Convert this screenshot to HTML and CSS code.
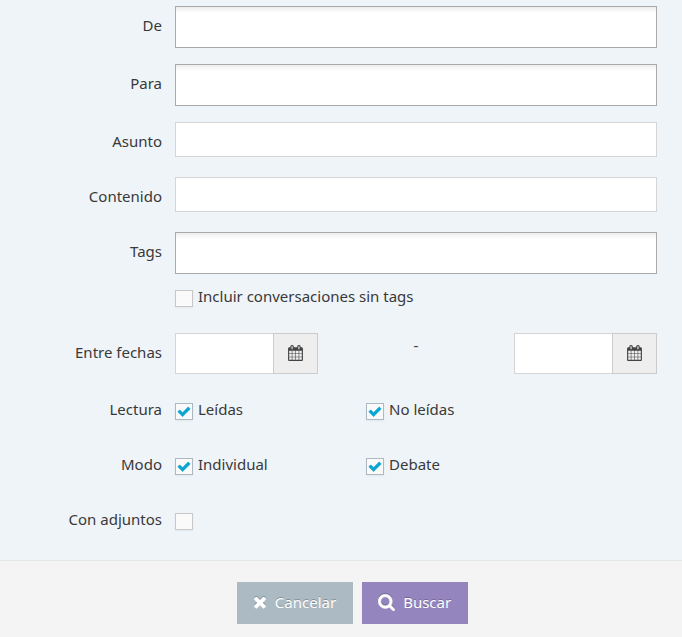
FILE: index.html
```html
<!DOCTYPE html>
<html lang="es">
<head>
<meta charset="utf-8">
<meta name="viewport" content="width=device-width, initial-scale=1">
<title>Buscar conversaciones</title>
<link rel="stylesheet" href="styles.css">
</head>
<body>
<svg class="defs" aria-hidden="true">
  <symbol id="check" viewBox="0 0 1792 1792"><path d="M1671 566q0 40-28 68l-724 724-136 136q-28 28-68 28t-68-28l-136-136-362-362q-28-28-28-68t28-68l136-136q28-28 68-28t68 28l294 295 656-657q28-28 68-28t68 28l136 136q28 28 28 68z"/></symbol>
  <symbol id="times" viewBox="200 0 1394 1792"><path d="M1490 1322q0 40-28 68l-136 136q-28 28-68 28t-68-28l-294-294-294 294q-28 28-68 28t-68-28l-136-136q-28-28-28-68t28-68l294-294-294-294q-28-28-28-68t28-68l136-136q28-28 68-28t68 28l294 294 294-294q28-28 68-28t68 28l136 136q28 28 28 68t-28 68l-294 294 294 294q28 28 28 68z"/></symbol>
  <symbol id="search" viewBox="64 0 1664 1792"><path d="M1216 832q0-185-131.500-316.500t-316.500-131.500-316.500 131.500-131.500 316.500 131.500 316.500 316.500 131.500 316.500-131.500 131.500-316.500zm512 832q0 52-38 90t-90 38q-54 0-90-38l-343-342q-179 124-399 124-143 0-273.500-55.500t-225-150-150-225-55.500-273.500 55.500-273.500 150-225 225-150 273.500-55.500 273.500 55.500 225 150 150 225 55.500 273.500q0 220-124 399l343 343q37 37 37 90z"/></symbol>
  <symbol id="calendar" viewBox="64 0 1664 1792"><path d="M192 1664h288v-288h-288v288zm352 0h320v-288h-320v288zm-352-352h288v-320h-288v320zm352 0h320v-320h-320v320zm-352-384h288v-288h-288v288zm736 736h320v-288h-320v288zm-384-736h320v-288h-320v288zm768 736h288v-288h-288v288zm-384-352h320v-320h-320v320zm-352-864v-288q0-13-9.500-22.500t-22.500-9.500h-64q-13 0-22.500 9.500t-9.500 22.500v288q0 13 9.500 22.500t22.500 9.500h64q13 0 22.500-9.500t9.500-22.500zm736 864h288v-320h-288v320zm-384-384h320v-288h-320v288zm384 0h288v-288h-288v288zm32-480v-288q0-13-9.500-22.500t-22.500-9.500h-64q-13 0-22.500 9.500t-9.500 22.500v288q0 13 9.500 22.500t22.500 9.500h64q13 0 22.500-9.500t9.500-22.500zm384-64v1280q0 52-38 90t-90 38h-1408q-52 0-90-38t-38-90v-1280q0-52 38-90t90-38h128v-96q0-66 47-113t113-47h64q66 0 113 47t47 113v96h384v-96q0-66 47-113t113-47h64q66 0 113 47t47 113v96h128q52 0 90 38t38 90z"/></symbol>
</svg>
<form class="search-form">
  <div class="fields">
    <div class="row"><label class="caption" for="de">De</label><input class="box tall" id="de" type="text"></div>
    <div class="row"><label class="caption" for="para">Para</label><input class="box tall" id="para" type="text"></div>
    <div class="row"><label class="caption" for="asunto">Asunto</label><input class="box" id="asunto" type="text"></div>
    <div class="row"><label class="caption" for="contenido">Contenido</label><input class="box" id="contenido" type="text"></div>
    <div class="row">
      <label class="caption" for="tags">Tags</label>
      <div class="stack">
        <input class="box tall" id="tags" type="text">
        <label class="option"><span class="tick"><input type="checkbox"><svg><use href="#check"/></svg></span>Incluir conversaciones sin tags</label>
      </div>
    </div>
    <div class="row">
      <label class="caption" for="desde">Entre fechas</label>
      <div class="dates">
        <div class="date"><input id="desde" type="text"><button type="button" aria-label="Elegir fecha inicial"><svg><use href="#calendar"/></svg></button></div>
        <span class="dash">-</span>
        <div class="date"><input aria-label="Hasta" type="text"><button type="button" aria-label="Elegir fecha final"><svg><use href="#calendar"/></svg></button></div>
      </div>
    </div>
    <div class="row" role="group" aria-labelledby="lectura">
      <span class="caption" id="lectura">Lectura</span>
      <div class="options">
        <label class="option"><span class="tick"><input type="checkbox" checked><svg><use href="#check"/></svg></span>Leídas</label>
        <label class="option"><span class="tick"><input type="checkbox" checked><svg><use href="#check"/></svg></span>No leídas</label>
      </div>
    </div>
    <div class="row" role="group" aria-labelledby="modo">
      <span class="caption" id="modo">Modo</span>
      <div class="options">
        <label class="option"><span class="tick"><input type="checkbox" checked><svg><use href="#check"/></svg></span>Individual</label>
        <label class="option"><span class="tick"><input type="checkbox" checked><svg><use href="#check"/></svg></span>Debate</label>
      </div>
    </div>
    <div class="row">
      <label class="caption" for="adjuntos">Con adjuntos</label>
      <div class="option"><span class="tick"><input id="adjuntos" type="checkbox"><svg><use href="#check"/></svg></span></div>
    </div>
  </div>
  <div class="actions">
    <button class="btn cancel" type="button"><svg><use href="#times"/></svg>Cancelar</button>
    <button class="btn submit" type="submit"><svg><use href="#search"/></svg>Buscar</button>
  </div>
</form>
</body>
</html>
```
FILE: styles.css
```css
* { box-sizing: border-box; }
body {
  margin: 0;
  background: #f4f4f4;
  color: #393939;
  font: 15px/20px "Noto Sans", "Open Sans", sans-serif;
}
input, button { font: inherit; margin: 0; border-radius: 0; }
.defs { display: none; }
.fields {
  display: flex;
  flex-direction: column;
  gap: 16px;
  padding: 6px 25px 21px 0;
  background: #eff4f8;
}
.row {
  display: grid;
  grid-template-columns: 162px minmax(0, 1fr);
  column-gap: 13px;
  align-items: start;
  min-height: 39px;
}
.caption { padding-top: 9px; text-align: right; }
.box {
  width: 100%;
  height: 35px;
  padding: 4px 8px;
  border: 1px solid #d5d5d5;
  background: #fff;
}
.tall {
  height: 42px;
  border-color: #aaa;
  background: linear-gradient(#eee 1%, #fff 15%);
}
.stack { display: flex; flex-direction: column; gap: 3px; }
.stack .option { height: 40px; }
.options { display: grid; grid-template-columns: 191px 1fr; }
.option {
  display: flex;
  align-items: flex-start;
  gap: 5px;
  height: 39px;
  padding-top: 9px;
}
.tick { position: relative; width: 18px; height: 17px; margin-top: 4px; }
.tick input {
  display: block;
  appearance: none;
  width: 18px;
  height: 17px;
  border: 1px solid #c8c8c8;
  background: #fafafa;
  box-shadow: 0 1px 2px rgba(0, 0, 0, .05);
}
.tick input:checked { border-color: #adb8c0; }
.tick svg {
  position: absolute;
  top: 1px;
  left: 2px;
  width: 14px;
  height: 15px;
  fill: #0aa5d2;
  stroke: #0aa5d2;
  stroke-width: 60px;
  visibility: hidden;
  pointer-events: none;
}
.tick input:checked + svg { visibility: visible; }
.dates { display: flex; justify-content: space-between; }
.date { display: flex; width: 143px; height: 41px; }
.date input {
  flex: 1;
  min-width: 0;
  padding: 4px 8px;
  border: 1px solid #d5d5d5;
  border-right: 0;
  background: #fff;
}
.date button {
  display: grid;
  place-items: center;
  width: 45px;
  padding: 0 0 1px;
  border: 1px solid #ccc;
  background: #eee;
}
.date svg { width: 15px; height: 16px; fill: #444; }
.dash { padding-top: 2px; }
.actions {
  display: flex;
  justify-content: center;
  gap: 9px;
  padding: 21px 0 13px 23px;
  border-top: 1px solid #e1e6e9;
}
.btn {
  display: flex;
  align-items: center;
  gap: 8px;
  height: 42px;
  padding: 0 17px 2px 16px;
  border: 0;
  color: #fff;
  text-shadow: 0 -1px 0 rgba(0, 0, 0, .25);
}
.btn svg {
  width: 17px;
  height: 18px;
  fill: currentColor;
  filter: drop-shadow(0 -1px 0 rgba(0, 0, 0, .25));
}
.cancel svg { width: 14px; }
.submit svg { stroke: currentColor; stroke-width: 50px; }
.cancel { background: #abbac3; }
.submit { background: #9585bf; }
```
